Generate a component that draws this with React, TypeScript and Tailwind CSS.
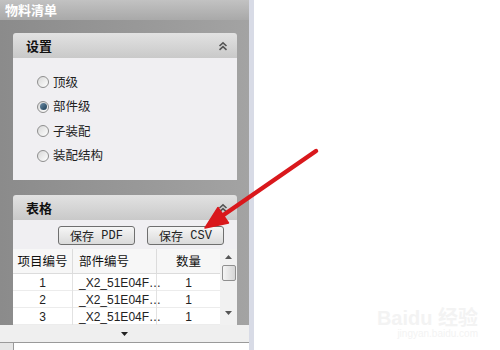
const cjk = { fontFamily: '"Noto Sans CJK SC", "Liberation Sans", sans-serif' };
const mono = { fontFamily: '"Liberation Mono", "Noto Sans CJK SC", monospace' };

const ChevronsUp = () => (
  <svg width="10" height="10" viewBox="0 0 10 10" className="text-[#555]">
    <path d="M1.5 5 L5 1.8 L8.5 5" fill="none" stroke="currentColor" strokeWidth="1.6" />
    <path d="M1.5 8.8 L5 5.6 L8.5 8.8" fill="none" stroke="currentColor" strokeWidth="1.6" />
  </svg>
);

const PanelHeader = ({ title }: { title: string }) => (
  <div className="h-[25px] flex items-center justify-between pl-[13px] pr-[9px] rounded-t-[3px] bg-gradient-to-b from-[#e2e2e2] to-[#c9c9c9]">
    <span className="text-[13px] font-bold text-[#111]" style={cjk}>{title}</span>
    <ChevronsUp />
  </div>
);

const Radio = ({ label, checked }: { label: string; checked?: boolean }) => (
  <div className="flex items-center gap-[4px] h-[24.5px]">
    <span className="w-[12px] h-[12px] rounded-full border border-[#8e8e8e] bg-gradient-to-br from-[#d8d8d8] to-[#ffffff] flex items-center justify-center">
      {checked && <span className="w-[7px] h-[7px] rounded-full bg-gradient-to-br from-[#6e8fa8] to-[#1d3d56]" />}
    </span>
    <span className="text-[12.5px] text-[#222]" style={cjk}>{label}</span>
  </div>
);

const Btn = ({ label }: { label: string }) => (
  <div className="w-[77px] h-[19px] rounded-[3px] border border-[#6f6f6f] bg-gradient-to-b from-[#f6f6f6] to-[#dadada] flex items-center justify-center text-[12px] text-[#222]" style={mono}>
    <span style={cjk}>保存</span>&nbsp;{label}
  </div>
);

const rows = ['1', '2', '3'];

export default function App() {
  return (
    <div className="relative w-[500px] h-[350px] flex overflow-hidden bg-white">
      <div className="w-[249px] flex flex-col">
        <div className="h-[20px] bg-gradient-to-b from-[#c2c2c2] to-[#a9a9a9] flex items-center px-[5px] text-white text-[13px] font-bold" style={cjk}>
          物料清单
        </div>
        <div className="h-[305px] overflow-hidden bg-gradient-to-r from-[#8b8b8b] to-[#a3a3a3] pl-[13px] pr-[12px] pt-[13px] flex flex-col gap-[15px]">
          <div className="h-[147px] flex flex-col shrink-0">
            <PanelHeader title="设置" />
            <div className="flex-1 bg-[#f0eff2] pl-[24px] pt-[12px]">
              <Radio label="顶级" />
              <Radio label="部件级" checked />
              <Radio label="子装配" />
              <Radio label="装配结构" />
            </div>
          </div>
          <div className="flex flex-col shrink-0">
            <PanelHeader title="表格" />
            <div className="bg-[#f0eff2]">
              <div className="h-[29px] flex items-center justify-end gap-[12px] pr-[13px] pt-[2px]">
                <Btn label="PDF" />
                <Btn label="CSV" />
              </div>
              <div className="flex">
                <div className="w-[207px] bg-white">
                  <div className="grid grid-cols-[60px_84px_63px] h-[25px] bg-[#f7f7f7] border-b border-[#dcdcdc] text-[12.5px] text-[#111]" style={cjk}>
                    <div className="flex items-center justify-center border-r border-[#dcdcdc]">项目编号</div>
                    <div className="flex items-center pl-[6px] border-r border-[#dcdcdc]">部件编号</div>
                    <div className="flex items-center justify-center">数量</div>
                  </div>
                  {rows.map((r) => (
                    <div key={r} className="grid grid-cols-[60px_84px_63px] h-[17px] border-b border-[#ececec] text-[12px] text-[#222]" style={{ fontFamily: '"Liberation Sans", sans-serif' }}>
                      <div className="flex items-center justify-center border-r border-[#e2e2e2]">{r}</div>
                      <div className="flex items-center pl-[6px] border-r border-[#e2e2e2]">_X2_51E04F…</div>
                      <div className="flex items-center justify-center">1</div>
                    </div>
                  ))}
                </div>
                <div className="w-[17px] bg-[#f1f1f1] flex flex-col items-center pt-[6px]">
                  <svg width="7" height="4" viewBox="0 0 7 4"><path d="M0 4 L3.5 0 L7 4 Z" fill="#555" /></svg>
                  <div className="mt-[6px] w-[14px] h-[16px] border border-[#8f8f8f] rounded-[2px] bg-gradient-to-r from-[#f4f4f4] to-[#d6d6d6]" />
                  <svg className="mt-[30px]" width="7" height="4" viewBox="0 0 7 4"><path d="M0 0 L3.5 4 L7 0 Z" fill="#555" /></svg>
                </div>
              </div>
            </div>
          </div>
        </div>
        <div className="h-[17px] bg-[#efefef] flex items-center justify-center">
          <svg width="7" height="4" viewBox="0 0 7 4"><path d="M0 0 L3.5 4 L7 0 Z" fill="#222" /></svg>
        </div>
        <div className="h-[8px] bg-[#e6e6e6] border-t border-[#9a9a9a] pl-[13px]">
          <div className="h-full bg-white border-l border-[#9a9a9a]" />
        </div>
      </div>
      <div className="w-[5px] bg-[#d8dbe6]" />
      <div className="flex-1 bg-white flex flex-col items-end justify-end pr-[22px] pb-[10px] text-[#f3f3f3]">
        <span className="text-[20px] font-bold leading-none" style={{ fontFamily: '"Liberation Sans", "Noto Sans CJK SC", sans-serif' }}>Baidu 经验</span>
        <span className="text-[10px] leading-tight" style={{ fontFamily: '"Liberation Sans", sans-serif' }}>jingyan.baidu.com</span>
      </div>
      <svg className="absolute inset-0 pointer-events-none" width="500" height="350" viewBox="0 0 500 350">
        <line x1="316" y1="151" x2="222" y2="216" stroke="#d9181c" strokeWidth="4.5" strokeLinecap="round" />
        <path d="M205 228 L228.5 223 L218 207.5 Z" fill="#d9181c" stroke="#d9181c" strokeWidth="1.5" strokeLinejoin="round" />
      </svg>
    </div>
  );
}
